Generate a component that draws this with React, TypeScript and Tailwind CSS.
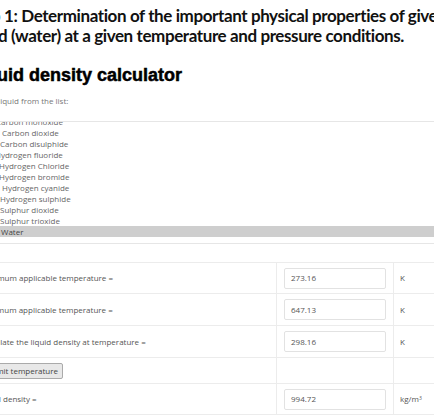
import React from "react";

const liquids = [
  { name: "Carbon monoxide", pad: "pl-[26px]" },
  { name: "Carbon dioxide", pad: "pl-[32px]" },
  { name: "Carbon disulphide", pad: "pl-[30px]" },
  { name: "Hydrogen fluoride", pad: "pl-[25px]" },
  { name: "Hydrogen Chloride", pad: "pl-[29px]" },
  { name: "Hydrogen bromide", pad: "pl-[29px]" },
  { name: "Hydrogen cyanide", pad: "pl-[32px]" },
  { name: "Hydrogen sulphide", pad: "pl-[30px]" },
  { name: "Sulphur dioxide", pad: "pl-[30px]" },
  { name: "Sulphur trioxide", pad: "pl-[30px]" },
  { name: "Water", pad: "pl-[31px]" },
];

const rows = [
  { label: "Minimum applicable temperature =", pad: "pl-[11px]", value: "273.16", unit: "K", h: "h-[31px]" },
  { label: "Maximum applicable temperature =", pad: "pl-[9px]", value: "647.13", unit: "K", h: "h-[32px]" },
  { label: "Calculate the liquid density at temperature =", pad: "pl-[10px]", value: "298.16", unit: "K", h: "h-[32px]" },
];

const Row = ({ label, pad, value, unit, h }: { label: string; pad: string; value: string; unit: React.ReactNode; h: string }) => (
  <div className={`grid grid-cols-[306px_117px_1fr] border-t border-[#ececec] ${h}`}>
    <div className={`flex items-center whitespace-nowrap ${pad}`}>{label}</div>
    <div className="flex items-center border-l border-[#ececec] pl-[7px]">
      <div className="flex items-center w-[102px] h-[21px] border border-[#e2e2e2] rounded-[2px] pl-[6px]">
        {value}
      </div>
    </div>
    <div className="flex items-center border-l border-[#ececec] pl-[6px]">{unit}</div>
  </div>
);

export default function App() {
  const [selected, setSelected] = React.useState("Water");
  return (
    <div className="w-[434px] h-[420px] overflow-hidden bg-white">
      <div className="-ml-[30px] w-[520px] font-['Open_Sans',sans-serif] text-[8px] text-[#555]">
        <h2 className="-ml-[2px] pt-[6px] font-['Lato',sans-serif] font-bold text-[17px] leading-[20px] tracking-[-0.4px] text-[#111] whitespace-nowrap">
          <span className="block">Step 1: Determination of the important physical properties of given</span>
          <span className="block">liquid (water) at a given temperature and pressure conditions.</span>
        </h2>
        <h1 className="mt-[18px] font-['Liberation_Sans',Arial,sans-serif] font-bold text-[18px] leading-[22px] text-black [-webkit-text-stroke:0.5px_black]">
          Liquid density calculator
        </h1>
        <p className="mt-[9px] pl-[4px] text-[#777] leading-[12px]">Select liquid from the list:</p>
        <div className="mt-[14px] h-[123px] border-t border-b border-[#e6e6e6] overflow-hidden">
          <ul className="-mt-[6px] text-[#666]">
            {liquids.map((l) => (
              <li
                key={l.name}
                onClick={() => setSelected(l.name)}
                className={`h-[11px] leading-[11px] whitespace-nowrap ${l.pad} ${selected === l.name ? "bg-[#cecece] text-[#444]" : ""}`}
              >
                {l.name}
              </li>
            ))}
          </ul>
        </div>
        <div className="h-[18px]" />
        {rows.map((r) => (
          <Row key={r.label} {...r} />
        ))}
        <div className="grid grid-cols-[306px_117px_1fr] border-t border-[#ececec] h-[26px]">
          <div className="flex items-center pl-[7px]">
            <button className="h-[16px] px-[4px] bg-[#e8e8e8] border border-[#aaa] rounded-[2px] text-[8px] text-[#444] leading-none">
              Submit temperature
            </button>
          </div>
          <div className="border-l border-[#ececec]" />
          <div className="border-l border-[#ececec]" />
        </div>
        <Row
          label="Liquid density ="
          pad="pl-[8px]"
          value="994.72"
          h="h-[32px] border-b"
          unit={
            <span>
              kg/m<sup className="text-[5px]">3</sup>
            </span>
          }
        />
      </div>
    </div>
  );
}
